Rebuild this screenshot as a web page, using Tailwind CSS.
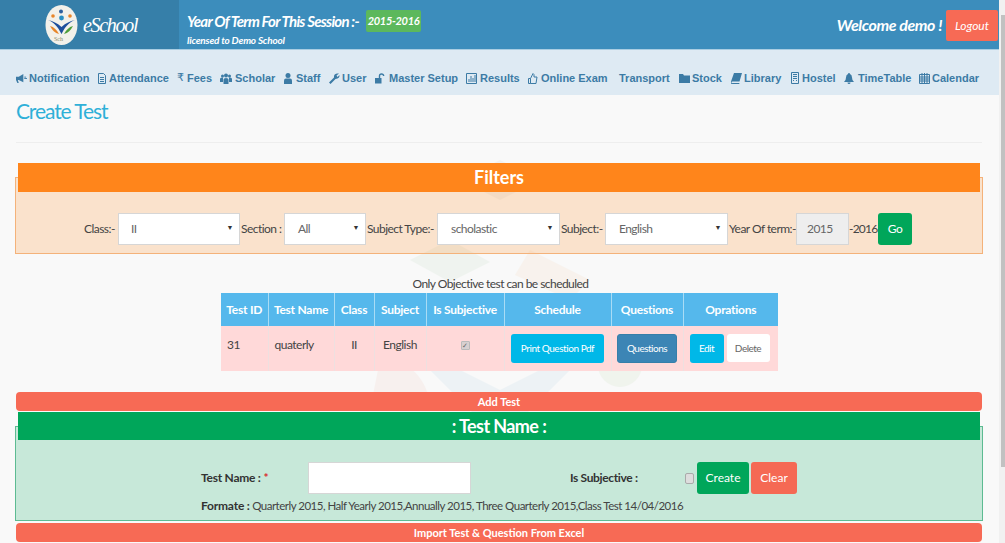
<!DOCTYPE html>
<html lang="en">
<head>
    <meta charset="UTF-8">
    <meta name="viewport" content="width=device-width, initial-scale=1.0">
    <title>eSchool - Create Test</title>
    <script src="https://cdn.jsdelivr.net/npm/@tailwindcss/browser@4"></script>
</head>
<body class="bg-[#f9f9f9] overflow-hidden font-['Lato','Liberation_Sans',sans-serif] text-[#333]">
<div class="flex h-[543px] w-[1005px] overflow-hidden">
    <div class="relative w-[999px] shrink-0">
        <!-- watermark behind the page -->
        <svg class="absolute left-[340px] top-[150px] w-[320px] h-[300px] opacity-[0.05]" viewBox="0 0 320 300">
            <path d="M120 30 L160 10 L200 30 L160 50Z" fill="#777"/>
            <path d="M70 110 L110 90 L150 112 L110 132Z" fill="#4a9a4a"/>
            <path d="M190 100 L250 130 L230 150 L175 125Z" fill="#f08a24"/>
            <path d="M40 210 C60 205 90 225 90 260 L30 260Z" fill="#e05a3a"/>
            <path d="M60 190 L160 290 L260 190 L160 240Z" fill="#1f7fb8"/>
            <circle cx="280" cy="215" r="22" fill="#5aa02c"/>
        </svg>

        <!-- top header -->
        <header class="relative flex h-[49px] bg-[#3c8dbc] text-white">
            <div class="flex w-[179px] items-center bg-[#367fa9] pl-[45px]">
                <svg class="h-[40px] w-[33px]" viewBox="0 0 33 40">
                    <ellipse cx="16.500" cy="20" rx="16" ry="20" fill="#f3f1ea"/>
                    <circle cx="16" cy="6.500" r="2" fill="#2d5f9e"/>
                    <circle cx="8" cy="11" r="1.800" fill="#e8862a"/>
                    <circle cx="25" cy="11" r="1.800" fill="#e8862a"/>
                    <circle cx="16.500" cy="13" r="2.400" fill="#2a8fc4"/>
                    <path d="M3 15 C8 17 12 20 16.500 29 C21 20 25 17 30 15 C25 16 21 18 16.500 22 C12 18 8 16 3 15Z" fill="#1f4f9c"/>
                    <path d="M5 21 C9 22 12 25 14 29 C10 28 7 25 5 21Z" fill="#e8862a"/>
                    <path d="M28 21 C24 22 21 25 19 29 C23 28 26 25 28 21Z" fill="#4f9e3a"/>
                    <text x="9" y="36" font-size="6" fill="#8a8a6a" font-family="Liberation Serif, serif">Sch</text>
                </svg>
                <span class="ml-[5px] text-[20px] italic leading-none tracking-[-1.3px] font-['Liberation_Serif',serif]">eSchool</span>
            </div>
            <div class="pl-[8px] pt-[10px]">
                <div class="flex items-center h-[22px]">
                    <span class="text-[15px] font-bold italic w-[179px] whitespace-nowrap tracking-[-0.75px]">Year Of Term For This Session :-</span>
                    <span class="flex h-[22px] w-[55px] items-center justify-center rounded-[2px] bg-[#5cb85c] text-[11px] font-bold italic whitespace-nowrap tracking-[-0.3px]">2015-2016</span>
                </div>
                <div class="mt-[2px] text-[10px] font-bold italic leading-[12px] tracking-[-0.2px]">licensed to Demo School</div>
            </div>
            <div class="ml-auto flex items-start">
                <span class="mt-[13px] mr-[4px] text-[16px] font-bold italic leading-[24px] tracking-[-0.4px]">Welcome demo !</span>
                <a class="mt-[10px] mr-[1px] flex h-[31px] w-[52px] items-center justify-center rounded-[2px] bg-[#f76a55] text-[12px] italic">Logout</a>
            </div>
        </header>

        <!-- main menu -->
        <nav class="relative flex items-start h-[46px] border-t border-[#a9cde2] bg-[#deeaf3] pl-[16px] pt-[20px] font-['Liberation_Sans',sans-serif] text-[11px] font-bold leading-[16px] text-[#3c7ba5]">
            <a class="flex items-center gap-[2px] w-[82px]">
                <svg class="h-[11px] w-[11px]" viewBox="0 0 12 12" fill="currentColor"><path d="M0 4h3l5-3v9L3 7.500H2l1 3.500H1.500L0 7.500z"/><path d="M9 4.500h2M9 6h3" stroke="currentColor"/></svg>Notification</a>
            <a class="flex items-center gap-[3px] w-[79px]">
                <svg class="h-[11px] w-[8px]" viewBox="0 0 8 11" fill="none" stroke="currentColor"><path d="M.5.500h5l2 2v8h-7zM2 4.500h4M2 6.500h4M2 8.500h4"/></svg>Attendance</a>
            <a class="flex items-center gap-[3px] w-[43px]"><span class="font-['DejaVu_Sans',sans-serif] text-[11px] font-normal">₹</span>Fees</a>
            <a class="flex items-center gap-[3px] w-[64px]">
                <svg class="h-[11px] w-[12px]" viewBox="0 0 12 11" fill="currentColor"><circle cx="2.500" cy="3" r="1.500"/><circle cx="9.500" cy="3" r="1.500"/><circle cx="6" cy="2.500" r="2"/><path d="M0 9V6q0-1.500 2-1.500h1V9zM9 9V4.500h1q2 0 2 1.500v3zM3.500 11V6.500q0-1.500 2.500-1.500t2.500 1.500V11z"/></svg>Scholar</a>
            <a class="flex items-center gap-[4px] w-[45px]">
                <svg class="h-[11px] w-[8px]" viewBox="0 0 8 11" fill="currentColor"><circle cx="4" cy="2.500" r="2.500"/><path d="M0 11V7.500Q0 5.500 2 5.500h4q2 0 2 2V11z"/></svg>Staff</a>
            <a class="flex items-center gap-[2px] w-[46px]">
                <svg class="h-[11px] w-[11px]" viewBox="0 0 11 11" fill="currentColor"><path d="M0 9.500 5 4.500Q4.500 1 8 .500L10 .500 7.500 2.500 8.500 4 10.500 2Q11 5.500 6.500 6L1.500 11z"/></svg>User</a>
            <a class="flex items-center gap-[4px] w-[91px]">
                <svg class="h-[11px] w-[10px]" viewBox="0 0 10 11" fill="none"><rect y="5" width="6.500" height="5.500" fill="currentColor"/><path d="M4.500 5V3Q4.500 1 6.500 1T8.700 3" stroke="currentColor" stroke-width="1.400"/></svg>Master Setup</a>
            <a class="flex items-center gap-[3px] w-[62px]">
                <svg class="h-[11px] w-[11px]" viewBox="0 0 11 11" fill="none" stroke="currentColor"><path d="M.5.500h10v10H.5zM3 9V6M5 9V3M7 9V5M9 9V2"/></svg>Results</a>
            <a class="flex items-center gap-[3px] w-[91px]">
                <svg class="h-[11px] w-[10px]" viewBox="0 0 10 11" fill="none" stroke="currentColor"><path d="M.5 5.500h2v5h-2zM2.500 5.500 5 .5q1.500.5 1 3.500h3l-1 6.500H2.500"/></svg>Online Exam</a>
            <a class="w-[60px]">Transport</a>
            <a class="flex items-center gap-[2px] w-[52px]">
                <svg class="h-[10px] w-[11px]" viewBox="0 0 11 10" fill="currentColor"><path d="M0 1h4l1 1.500h6V10H0z"/></svg>Stock</a>
            <a class="flex items-center gap-[2px] w-[60px]">
                <svg class="h-[11px] w-[11px]" viewBox="0 0 11 11" fill="currentColor"><path d="M3 0h8L8.500 8.500H1.500Q.5 8.500.5 9.500t1 .5h7l-.3 1H1Q-.5 11 0 8.500z"/></svg>Library</a>
            <a class="flex items-center gap-[3px] w-[53px]">
                <svg class="h-[12px] w-[8px]" viewBox="0 0 8 12" fill="none" stroke="currentColor"><path d="M.5.500h7v11h-7zM2 2.500h4M2 4.500h4M2 6.500h4M2 8.500h1M5 8.500h1"/></svg>Hostel</a>
            <a class="flex items-center gap-[4px] w-[75px]">
                <svg class="h-[11px] w-[10px]" viewBox="0 0 10 11" fill="currentColor"><path d="M5 0q1 0 1 1 2 .5 2 3.500 0 3 2 4.500H0q2-1.500 2-4.500Q2 1.500 4 1q0-1 1-1zM3.500 9.500h3Q6.500 11 5 11T3.500 9.500z"/></svg>TimeTable</a>
            <a class="flex items-center gap-[2px]">
                <svg class="h-[11px] w-[11px]" viewBox="0 0 11 11" fill="none" stroke="currentColor"><path d="M.5 1.500h10v9H.5zM.5 4h10M.5 6h10M.5 8h10M3 0v11M5.500 0v11M8 0v11"/></svg>Calendar</a>
        </nav>

        <!-- page body -->
        <main class="relative pl-[16px] pr-[17px]">
            <h1 class="mt-[2px] text-[21px] leading-[27px] font-normal text-[#2fb0d8] tracking-[-1.1px]">Create Test</h1>
            <hr class="mt-[18px] border-[#eeeeee]">

            <!-- filters -->
            <section class="mt-[34px] -mx-px h-[77px] border border-[#f4b27a] bg-[#ff851b]/20">
                <h2 class="-mt-[15px] mx-[2px] h-[29px] bg-[#ff851b] text-center text-[18px] font-bold leading-[29px] text-white">Filters</h2>
                <div class="mt-[21px] flex items-center pl-[68px] text-[12px] text-[#444] tracking-[-0.55px]">
                    <label class="w-[34px] whitespace-nowrap">Class:-</label>
                    <div class="flex h-[32px] w-[122px] items-center justify-between border border-[#d6d6d6] bg-white pl-[12px] pr-[6px] text-[#666]">II<span class="text-[7px] text-[#333] mb-[3px]">▼</span></div>
                    <label class="w-[44px] pl-[1px] whitespace-nowrap">Section :</label>
                    <div class="flex h-[32px] w-[82px] items-center justify-between border border-[#d6d6d6] bg-white pl-[13px] pr-[6px] text-[#666]">All<span class="text-[7px] text-[#333] mb-[3px]">▼</span></div>
                    <label class="w-[71px] pl-[1px] whitespace-nowrap">Subject Type:-</label>
                    <div class="flex h-[32px] w-[123px] items-center justify-between border border-[#d6d6d6] bg-white pl-[13px] pr-[6px] text-[#666]">scholastic<span class="text-[7px] text-[#333] mb-[3px]">▼</span></div>
                    <label class="w-[45px] pl-[1px] whitespace-nowrap">Subject:-</label>
                    <div class="flex h-[32px] w-[123px] items-center justify-between border border-[#d6d6d6] bg-white pl-[13px] pr-[6px] text-[#666]">English<span class="text-[7px] text-[#333] mb-[3px]">▼</span></div>
                    <label class="w-[68px] pl-[1px] whitespace-nowrap">Year Of term:-</label>
                    <div class="flex h-[32px] w-[53px] items-center border border-[#d6d6d6] bg-[#eeeeee] pl-[10px] text-[#666]">2015</div>
                    <span class="w-[29px] tracking-[-0.8px]">-2016</span>
                    <button class="h-[32px] w-[34px] rounded-[3px] bg-[#00a65a] text-white">Go</button>
                </div>
            </section>

            <p class="mt-[22px] text-center text-[12px] leading-[16px] text-[#444] pl-[3px] tracking-[-0.55px]">Only Objective test can be scheduled</p>
            <table class="ml-[205px] mt-[1px] w-[557px] table-fixed border-collapse text-[12px]">
                <thead>
                    <tr class="h-[33px] bg-[#55b8ec] text-white font-bold tracking-[-0.25px]">
                        <th class="w-[47px] border-r border-[#a9dcf5] font-bold">Test ID</th>
                        <th class="w-[66px] border-r border-[#a9dcf5] font-bold">Test Name</th>
                        <th class="w-[40px] border-r border-[#a9dcf5] font-bold">Class</th>
                        <th class="w-[52px] border-r border-[#a9dcf5] font-bold">Subject</th>
                        <th class="w-[78px] border-r border-[#a9dcf5] font-bold">Is Subjective</th>
                        <th class="w-[107px] border-r border-[#a9dcf5] font-bold">Schedule</th>
                        <th class="w-[72px] border-r border-[#a9dcf5] font-bold">Questions</th>
                        <th class="font-bold">Oprations</th>
                    </tr>
                </thead>
                <tbody>
                    <tr class="h-[45px] bg-[#ffd9d9] text-[#444] align-top tracking-[-0.5px]">
                        <td class="border-r border-[#eee0e0] pl-[6px] pt-[10px]">31</td>
                        <td class="border-r border-[#eee0e0] pl-[6px] pt-[10px]">quaterly</td>
                        <td class="border-r border-[#eee0e0] pt-[10px] text-center">II</td>
                        <td class="border-r border-[#eee0e0] pt-[10px] text-center">English</td>
                        <td class="border-r border-[#eee0e0] pt-[9px] text-center"><span class="inline-flex h-[9px] w-[9px] items-center justify-center rounded-[1px] bg-[#d8d0d0] border border-[#bbb] text-[7px] leading-none text-[#666]">✓</span></td>
                        <td class="border-r border-[#eee0e0] pt-[8px] text-center"><button class="h-[29px] w-[93px] rounded-[3px] bg-[#00b8e8] text-[10px] text-white tracking-[-0.45px]">Print Question Pdf</button></td>
                        <td class="border-r border-[#eee0e0] pt-[8px] text-center"><button class="h-[29px] w-[60px] rounded-[3px] border border-[#367fa9] bg-[#3c85b5] text-[10px] text-white tracking-[-0.5px]">Questions</button></td>
                        <td class="pt-[8px] pl-[6px]"><div class="flex gap-[3px]"><button class="h-[29px] w-[34px] rounded-[3px] bg-[#00b8e8] text-[10px] text-white">Edit</button><button class="h-[28px] w-[43px] rounded-[3px] bg-white text-[10px] text-[#666]">Delete</button></div></td>
                    </tr>
                </tbody>
            </table>

            <div class="mt-[21px] h-[19px] rounded-[4px] bg-[#f76a55] text-center text-[11px] font-bold leading-[19px] text-white">Add Test</div>

            <!-- test name form -->
            <section class="mt-[15px] -mx-px h-[95px] border border-[#5dbb92] bg-[#00a65a]/20">
                <h2 class="-mt-[15px] mx-[2px] h-[28px] bg-[#00a65a] text-center text-[18px] font-bold leading-[28px] text-white tracking-[-0.6px]">: Test Name :</h2>
                <div class="mt-[22px] flex h-[32px] items-center pl-[185px] text-[12px] text-[#333]">
                    <label class="w-[107px] font-bold tracking-[-0.25px]">Test Name : <span class="text-[#d9272e]">*</span></label>
                    <input type="text" class="h-[32px] w-[163px] border border-[#d6d6d6] bg-white">
                    <label class="ml-[99px] w-[115px] font-bold tracking-[-0.35px]">Is Subjective :</label>
                    <span class="h-[11px] w-[9px] rounded-[2px] border border-[#aaa] bg-[#ddd]"></span>
                    <button class="ml-[3px] h-[32px] w-[52px] rounded-[3px] bg-[#00a65a] text-white">Create</button>
                    <button class="ml-[2px] h-[32px] w-[46px] rounded-[3px] bg-[#f56954] text-white">Clear</button>
                </div>
                <p class="mt-[4px] pl-[185px] text-[11.5px] leading-[16px] text-[#444] tracking-[-0.5px]"><b class="text-[12px] text-[#333] tracking-[-0.2px]">Formate :</b> Quarterly 2015, Half Yearly 2015,Annually 2015, Three Quarterly 2015,Class Test 14/04/2016</p>
            </section>

            <div class="mt-[2px] h-[19px] rounded-[4px] bg-[#f76a55] text-center text-[11px] font-bold leading-[19px] text-white">Import Test &amp; Question From Excel</div>
        </main>
    </div>

    <!-- page scrollbar -->
    <div class="flex w-[6px] flex-col bg-[#f1f1f1] pl-[2px] pt-[15px]">
        <div class="h-[452px] bg-[#c1c1c1]"></div>
    </div>
</div>
</body>
</html>
